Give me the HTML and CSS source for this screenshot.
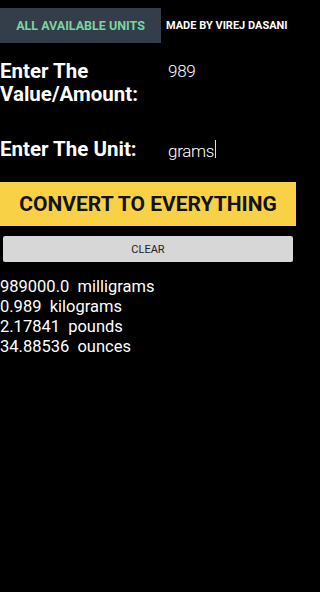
FILE: index.html
```html
<!DOCTYPE html>
<html>
<head>
<meta charset="utf-8">
<link rel="stylesheet" href="styles.css">
</head>
<body>
<div class="tabs">
  <div class="tab active">ALL AVAILABLE UNITS</div>
  <div class="tab">MADE BY VIREJ DASANI</div>
</div>
<div class="row row-value">
  <div class="label">Enter The<br>Value/Amount:</div>
  <div class="input">989</div>
</div>
<div class="row row-unit">
  <div class="label">Enter The Unit:</div>
  <div class="input">grams<span class="cursor"></span></div>
</div>
<div class="convert">CONVERT TO EVERYTHING</div>
<div class="clear">CLEAR</div>
<div class="results">
  <div class="line">989000.0  milligrams</div>
  <div class="line">0.989  kilograms</div>
  <div class="line">2.17841  pounds</div>
  <div class="line">34.88536  ounces</div>
</div>
</body>
</html>
```
FILE: styles.css
```css
html, body {
  margin: 0;
  padding: 0;
  background: #000;
  width: 296px;
  height: 592px;
  overflow: hidden;
  font-family: Roboto, "Liberation Sans", sans-serif;
  color: #fff;
}
.tabs {
  margin-top: 8px;
  display: flex;
  height: 35px;
}
.tab {
  display: flex;
  align-items: center;
  justify-content: center;
  font-size: 11px;
  font-weight: bold;
  color: #fff;
}
.tab.active {
  width: 161px;
  background: #333e4a;
  color: #7ed3a3;
  font-size: 12.5px;
}
.tab + .tab {
  flex: 1;
  justify-content: flex-start;
  padding-left: 5px;
}
.row {
  display: flex;
}
.row-value {
  margin-top: 17px;
}
.row-unit {
  margin-top: 32px;
}
.label {
  width: 168px;
  font-size: 20.5px;
  font-weight: bold;
  line-height: 23px;
}
.input {
  font-size: 17px;
  font-weight: 300;
  letter-spacing: -0.3px;
  line-height: 20px;
  padding-top: 1px;
  display: flex;
  align-items: flex-start;
}
.row-unit .input {
  padding-top: 3px;
}
.cursor {
  display: inline-block;
  width: 1px;
  height: 18px;
  background: #ddd;
  margin-left: 1px;
  margin-top: -1px;
}
.convert {
  margin-top: 21px;
  height: 44px;
  background: #f8d146;
  color: #121212;
  font-size: 21px;
  font-weight: bold;
  display: flex;
  align-items: center;
  justify-content: center;
}
.clear {
  margin: 10px 3px 0 3px;
  height: 26px;
  background: #d7d7d7;
  border-radius: 2px;
  color: #222;
  font-size: 11px;
  display: flex;
  align-items: center;
  justify-content: center;
}
.results {
  margin-top: 15px;
  font-size: 16.5px;
  line-height: 20px;
}
.line {
  white-space: pre;
}
```
